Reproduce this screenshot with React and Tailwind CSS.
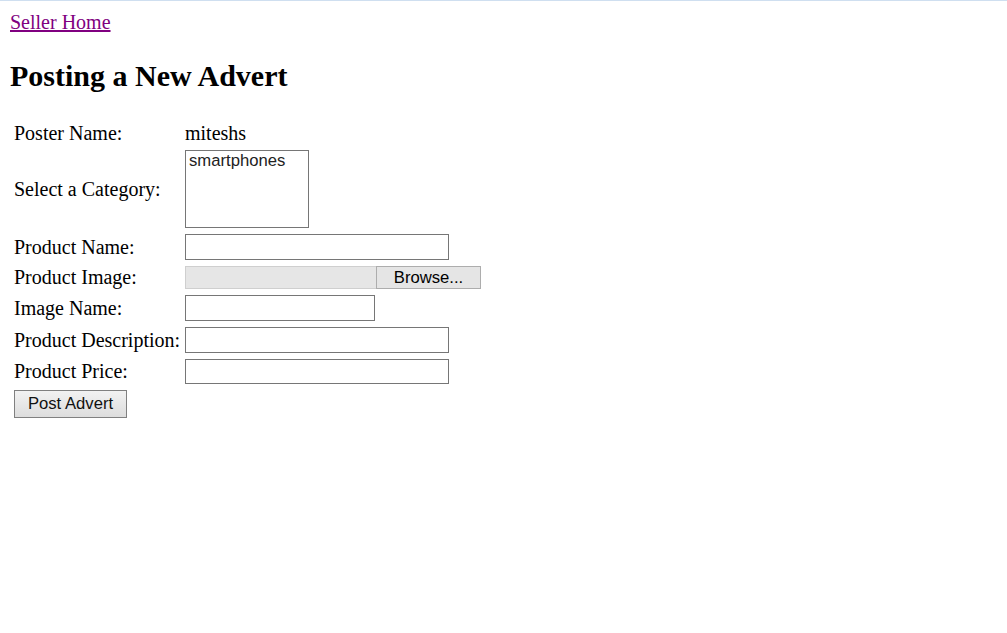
const serif = 'font-["Liberation_Serif","Times_New_Roman",serif]';

function Row({ label, children, className = '' }) {
  return (
    <div className={`flex items-center ${className}`}>
      <div className="w-[171px] shrink-0 text-[20px] leading-[22px]">{label}</div>
      {children}
    </div>
  );
}

function TextBox({ width }) {
  return (
    <input
      type="text"
      className={`${width} h-[26px] border border-[#767676] bg-white px-[2px] font-["Liberation_Sans",Arial,sans-serif] text-[16.67px] outline-none`}
    />
  );
}

export default function App() {
  return (
    <div className={`min-h-[633px] bg-white text-black ${serif}`}>
      <div className="h-px bg-[#cfdff0]" />
      <div className="px-[10px] pt-[10px]">
        <div className="text-[20px] leading-[23px]">
          <a href="#" className="text-[#800080] underline">Seller Home</a>
        </div>
        <h2 className="my-[25px] text-[30px] font-bold leading-[34.5px]">Posting a New Advert</h2>

        <form className="flex flex-col gap-[6px] pl-[4px] pt-[3px]" onSubmit={(e) => e.preventDefault()}>
          <Row label="Poster Name:">
            <span className="text-[20px] leading-[22px]">miteshs</span>
          </Row>

          <Row label="Select a Category:">
            <div className='h-[78px] w-[124px] border border-[#767676] bg-white px-[3px] font-["Liberation_Sans",Arial,sans-serif] text-[16.67px] leading-[19px] text-[#222]'>
              smartphones
            </div>
          </Row>

          <Row label="Product Name:">
            <TextBox width="w-[264px]" />
          </Row>

          <Row label="Product Image:">
            <div className='flex h-[23px] font-["Liberation_Sans",Arial,sans-serif] text-[16.67px]'>
              <div className="w-[191px] border border-r-0 border-[#cfcfcf] bg-[#e6e6e6]" />
              <button type="button" className="w-[105px] border border-[#adadad] bg-[#e5e5e5] leading-[21px] text-black">
                Browse...
              </button>
            </div>
          </Row>

          <Row label="Image Name:">
            <TextBox width="w-[190px]" />
          </Row>

          <Row label="Product Description:">
            <TextBox width="w-[264px]" />
          </Row>

          <Row label="Product Price:">
            <input
              type="text"
              className="h-[25px] w-[264px] border border-[#767676] bg-white outline-none"
            />
          </Row>

          <div>
            <button
              type="submit"
              className='h-[28px] w-[113px] border border-[#808080] bg-gradient-to-b from-[#f2f2f2] to-[#dddddd] font-["Liberation_Sans",Arial,sans-serif] text-[16.67px] leading-[26px] text-[#111]'
            >
              Post Advert
            </button>
          </div>
        </form>
      </div>
    </div>
  );
}
